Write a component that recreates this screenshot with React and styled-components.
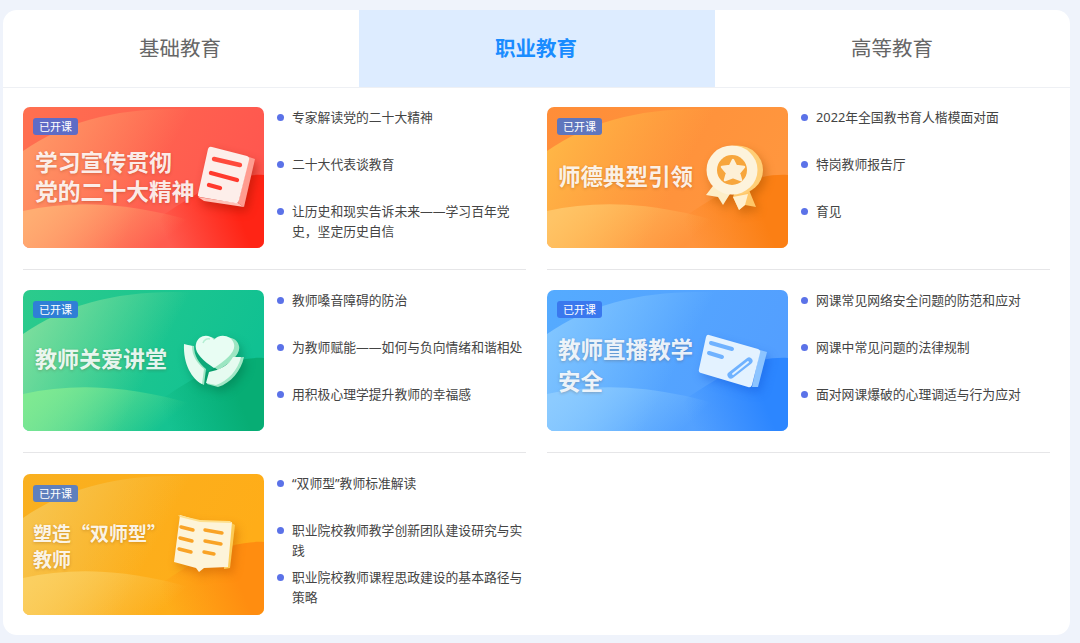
import React from "react";
import styled, { createGlobalStyle } from "styled-components";

const Global = createGlobalStyle`
  html, body { margin: 0; padding: 0; background: #eff3fb; }
  body { font-family: "Noto Sans CJK SC", "Noto Sans", sans-serif; }
  * { box-sizing: border-box; }
`;

const Page = styled.div`
  width: 1080px;
  height: 643px;
  padding: 10px 10px 8px 3px;
  background: #eff3fb;
  overflow: hidden;
`;
const Panel = styled.main`
  height: 625px;
  background: #fff;
  border-radius: 14px;
  overflow: hidden;
`;
const Tabs = styled.nav`
  display: grid;
  grid-template-columns: repeat(3, 356px);
  height: 78px;
  border-bottom: 1px solid #eef0f4;
`;
const Tab = styled.div`
  display: flex;
  align-items: center;
  justify-content: center;
  padding: 0 2px 3px 0;
  font-size: 20.5px;
  font-weight: ${(p) => (p.$active ? 700 : 400)};
  color: ${(p) => (p.$active ? "#1a8cff" : "#666")};
  background: ${(p) => (p.$active ? "#ddecff" : "transparent")};
`;
const Grid = styled.section`
  display: grid;
  grid-template-columns: 503px 503px;
  column-gap: 21px;
  row-gap: 20px;
  padding: 19px 0 0 20px;
`;
const Course = styled.article`
  display: flex;
  height: ${(p) => (p.$last ? "141px" : "163px")};
  margin-top: ${(p) => (p.$last ? "1px" : 0)};
  padding-bottom: ${(p) => (p.$last ? 0 : "21px")};
  border-bottom: ${(p) => (p.$last ? "none" : "1px solid #e6e6e8")};
`;
const Cover = styled.div`
  position: relative;
  flex: none;
  width: 241px;
  height: 141px;
  padding: 11px 10px 0;
  border-radius: 7px;
  overflow: hidden;
`;
const CoverArt = styled.svg`
  position: absolute;
  inset: 0;
  width: 241px;
  height: 141px;
`;
const Badge = styled.span`
  position: relative;
  display: flex;
  align-items: center;
  justify-content: center;
  width: 45px;
  height: 17px;
  border-radius: 3px;
  font-size: 11px;
  line-height: 17px;
  color: #fff;
  background: ${(p) => p.$bg};
`;
const Title = styled.h3`
  position: relative;
  margin: ${(p) => p.$top}px 0 0 ${(p) => p.$left}px;
  width: ${(p) => p.$width}px;
  font-family: ${(p) => (p.$tight ? '"Liberation Sans", ' : "")}"Noto Sans CJK SC", sans-serif;
  font-size: ${(p) => p.$size}px;
  line-height: ${(p) => p.$line}px;
  font-weight: 700;
  color: rgba(255, 255, 255, 0.9);
  text-shadow: 0 1px 3px rgba(90, 40, 0, 0.25);
`;
const IconSlot = styled.div`
  position: absolute;
  left: ${(p) => p.$left}px;
  top: ${(p) => p.$top}px;
  filter: drop-shadow(3px 5px 5px ${(p) => p.$shadow});
  line-height: 0;
`;
const List = styled.ul`
  flex: 1;
  margin: ${(p) => (p.$last ? "-1px" : 0)} 0 0 13px;
  padding: 0;
  list-style: none;
`;
const Item = styled.li`
  display: flex;
  gap: 8px;
  height: 47px;
  font-family: "Noto Sans", "Noto Sans CJK SC", sans-serif;
  font-size: 12.8px;
  line-height: 20px;
  color: #444;
`;
const Dot = styled.i`
  flex: none;
  width: 7px;
  height: 7px;
  margin-top: 6.5px;
  border-radius: 50%;
  background: #5b72e8;
`;
const ItemText = styled.span`
  width: 234px;
`;

const DocIcon = () => (
  <svg width="60" height="66" viewBox="0 0 60 66">
    <path d="M53 13 L59 15 L48 63 L42 59 Z" fill="#ff9c90" />
    <path d="M2 53 L42 59 L48 63 L8 57 Z" fill="#ffc0b6" />
    <path d="M16 3 L51 12 Q54 13 53 16 L43 56 Q42 60 39 59 L4 53 Q1 52 2 50 L12 5 Q13 2 16 3 Z" fill="#fdeeea" />
    <path d="M18 15 L44 21" stroke="#ff4a3c" strokeWidth="4.4" strokeLinecap="round" />
    <path d="M15 29 L41 36" stroke="#ff3a2e" strokeWidth="4.4" strokeLinecap="round" />
    <path d="M13 41 L24 44" stroke="#ff3a2e" strokeWidth="4.4" strokeLinecap="round" />
  </svg>
);
const MedalIcon = () => (
  <svg width="64" height="70" viewBox="0 0 64 70">
    <path d="M4 51 L16 53 L21 61 L33 42 L14 38 Z" fill="#fdeec8" />
    <path d="M31 53 L37 66 L43 61 L54 63 L47 46 L35 42 Z" fill="#ffc768" />
    <path d="M31 53 L37 66 L43 61 L46 50 Z" fill="#fff0cf" />
    <ellipse cx="35" cy="26" rx="26" ry="24.5" fill="#ffce76" />
    <ellipse cx="30" cy="26" rx="25.5" ry="24.5" fill="#fdf3dc" />
    <ellipse cx="30" cy="26" rx="15" ry="15" fill="#f7a63c" />
    <path d="M31 16 L34 22 L42 23 L37 29 L39 36 L31 33 L23 36 L25 29 L20 23 L28 22 Z" fill="#fdf0d6" stroke="#fdf0d6" strokeWidth="2.5" strokeLinejoin="round" />
  </svg>
);
const CareIcon = () => (
  <svg width="66" height="58" viewBox="0 0 66 58">
    <path d="M35 37 C23 29 15 21 17 12 C19 3 30 1 35 9 C40 2 54 3 56 13 C58 21 48 30 35 37 Z" fill="#9ce6c2" transform="translate(3 1)" />
    <path d="M34 36 C22 28 14 20 16 12 C18 3 29 1 34 8 C39 1 52 3 54 12 C56 20 46 28 34 36 Z" fill="#e8fdf3" />
    <path d="M23 11 C24 8 27 6 30 7" stroke="#b5efd3" strokeWidth="1.5" fill="none" />
    <path d="M6 13 L14 14 C14 24 19 31 26 37 L24 53 C14 48 5 33 6 13 Z" fill="#9fe6c4" />
    <path d="M4 12 L12 14 C12 24 17 31 24 37 L22 52 C12 47 3 32 4 12 Z" fill="#e6fbf0" />
    <path d="M64 25 L54 26 C50 34 41 39 30 41 L27 52 L38 55 C51 51 61 39 64 25 Z" fill="#a2e7c6" />
    <path d="M61 25 L53 25 C49 33 40 38 29 40 L26 51 L36 53 C48 49 58 38 61 25 Z" fill="#e6fbf0" />
  </svg>
);
const CardIcon = () => (
  <svg width="74" height="60" viewBox="0 0 74 60">
    <path d="M64 17 L71 19 L62 54 L56 54 Z" fill="#8cc4ff" />
    <path d="M13 2 L62 16 Q65 17 64 20 L56 52 Q55 55 52 54 L5 40 Q2 39 3 36 L10 4 Q11 1 13 2 Z" fill="#e3f2ff" />
    <path d="M15 10 L36 16" stroke="#6fb2ff" strokeWidth="4" strokeLinecap="round" />
    <path d="M13 20 L26 24" stroke="#6fb2ff" strokeWidth="4" strokeLinecap="round" />
    <path d="M35 42 L53 28" stroke="#6fb2ff" strokeWidth="7" strokeLinecap="round" />
    <path d="M37 41 L52 29" stroke="#e3f2ff" strokeWidth="2" strokeLinecap="round" />
  </svg>
);
const BookIcon = () => (
  <svg width="64" height="64" viewBox="0 0 64 64">
    <path d="M56 9 L63 13 L58 56 L52 57 Z" fill="#fdcb55" />
    <path d="M8 3 L28 9 L60 10 L56 55 L32 56 L27 60 L24 56 L2 50 Z" fill="#fdf4d9" />
    <path d="M6 3 L28 8 L58 9 L60 11 L28 10 L8 5 Z" fill="#fde08e" />
    <g stroke="#f9a326" strokeWidth="3.4" strokeLinecap="round">
      <path d="M9 15 L21 18" />
      <path d="M8 26 L20 29" />
      <path d="M7 37 L19 40" />
      <path d="M33 18 L50 21" />
      <path d="M33 29 L49 32" />
      <path d="M32 40 L42 42" />
    </g>
  </svg>
);

const Art = ({ id, c }) => (
  <CoverArt viewBox="0 0 241 141" preserveAspectRatio="none">
    <defs>
      <linearGradient id={`${id}b`} x1="0" y1="0" x2="1" y2="0.3">
        <stop offset="0" stopColor={c.baseL} />
        <stop offset="1" stopColor={c.baseR} />
      </linearGradient>
      <linearGradient id={`${id}w`} x1="0" y1="0.15" x2="1" y2="0.45">
        <stop offset="0" stopColor={c.wave} stopOpacity="1" />
        <stop offset="0.6" stopColor={c.wave} stopOpacity="0" />
      </linearGradient>
      <linearGradient id={`${id}d`} gradientUnits="userSpaceOnUse" x1="130" y1="141" x2="230" y2="100">
        <stop offset="0.15" stopColor={c.dark} stopOpacity="0" />
        <stop offset="0.85" stopColor={c.dark} stopOpacity="1" />
      </linearGradient>
      <linearGradient id={`${id}l`} x1="0" y1="0.4" x2="1" y2="0.6">
        <stop offset="0" stopColor={c.low} stopOpacity="1" />
        <stop offset="0.65" stopColor={c.low} stopOpacity="0" />
      </linearGradient>
    </defs>
    <rect width="241" height="141" fill={`url(#${id}b)`} />
    <path d="M241 68 C205 66 175 85 140 108 L120 141 L241 141 Z" fill={`url(#${id}d)`} />
    <path d="M0 44 C40 16 90 2 150 2 C190 2 220 6 241 14 L241 141 L0 141 Z" fill={`url(#${id}w)`} />
    <path d="M0 104 C70 88 150 100 241 141 L0 141 Z" fill={`url(#${id}l)`} />
  </CoverArt>
);

const red = { baseL: "#ff7050", baseR: "#ff574f", wave: "#ff9a68", dark: "#ff2415", low: "#ffad72" };
const orange = { baseL: "#ff8d38", baseR: "#ff963e", wave: "#ffb947", dark: "#fb7f14", low: "#ffc466" };
const green = { baseL: "#2ccb8c", baseR: "#10c192", wave: "#80df9e", dark: "#07ad74", low: "#7ee992" };
const blue = { baseL: "#55abff", baseR: "#539fff", wave: "#84c7ff", dark: "#2c86ff", low: "#8ccbff" };
const yellow = { baseL: "#f9b020", baseR: "#ffad18", wave: "#f7c652", dark: "#ff8d10", low: "#fbcf60" };

const courses = [
  {
    id: "a", colors: red, badge: "#5f6cc6", tight: true,
    title: ["学习宣传贯彻", "党的二十大精神"], size: 22.8, line: 29, top: 14, tleft: 2, width: 170,
    icon: <DocIcon />, ix: 173, iy: 37, shadow: "rgba(150,20,0,.45)",
    items: ["专家解读党的二十大精神", "二十大代表谈教育", "让历史和现实告诉未来——学习百年党史，坚定历史自信"],
  },
  {
    id: "b", colors: orange, badge: "#5f76bd",
    title: ["师德典型引领"], size: 22.5, line: 28, top: 26, tleft: 1, width: 150,
    icon: <MedalIcon />, ix: 155, iy: 37, shadow: "rgba(160,80,0,.45)",
    items: ["2022年全国教书育人楷模面对面", "特岗教师报告厅", "育见"],
  },
  {
    id: "c", colors: green, badge: "#2f7fd6",
    title: ["教师关爱讲堂"], size: 22, line: 28, top: 25, tleft: 2, width: 150,
    icon: <CareIcon />, ix: 157, iy: 42, shadow: "rgba(0,110,70,.45)",
    items: ["教师嗓音障碍的防治", "为教师赋能——如何与负向情绪和谐相处", "用积极心理学提升教师的幸福感"],
  },
  {
    id: "d", colors: blue, badge: "#3a78ee",
    title: ["教师直播教学", "安全"], size: 22.5, line: 32, top: 14, tleft: 1, width: 150,
    icon: <CardIcon />, ix: 149, iy: 43, shadow: "rgba(20,90,220,.45)",
    items: ["网课常见网络安全问题的防范和应对", "网课中常见问题的法律规制", "面对网课爆破的心理调适与行为应对"],
  },
  {
    id: "e", colors: yellow, badge: "#5f80bd", last: true,
    title: ["塑造“双师型”", "教师"], size: 19, line: 26, top: 17.5, tleft: 0, width: 140,
    icon: <BookIcon />, ix: 149, iy: 38, shadow: "rgba(190,90,0,.45)",
    items: ["“双师型”教师标准解读", "职业院校教师教学创新团队建设研究与实践", "职业院校教师课程思政建设的基本路径与策略"],
  },
];

export default function App() {
  return (
    <Page>
      <Global />
      <Panel>
        <Tabs>
          <Tab>基础教育</Tab>
          <Tab $active>职业教育</Tab>
          <Tab>高等教育</Tab>
        </Tabs>
        <Grid>
          {courses.map((c) => (
            <Course key={c.id} $last={c.last}>
              <Cover>
                <Art id={c.id} c={c.colors} />
                <Badge $bg={c.badge}>已开课</Badge>
                <Title $top={c.top} $left={c.tleft} $size={c.size} $line={c.line} $width={c.width} $tight={c.tight}>
                  {c.title.map((t, i) => (
                    <React.Fragment key={t}>
                      {i > 0 && <br />}
                      {t}
                    </React.Fragment>
                  ))}
                </Title>
                <IconSlot $left={c.ix} $top={c.iy} $shadow={c.shadow}>
                  {c.icon}
                </IconSlot>
              </Cover>
              <List $last={c.last}>
                {c.items.map((t) => (
                  <Item key={t}>
                    <Dot />
                    <ItemText>{t}</ItemText>
                  </Item>
                ))}
              </List>
            </Course>
          ))}
        </Grid>
      </Panel>
    </Page>
  );
}
